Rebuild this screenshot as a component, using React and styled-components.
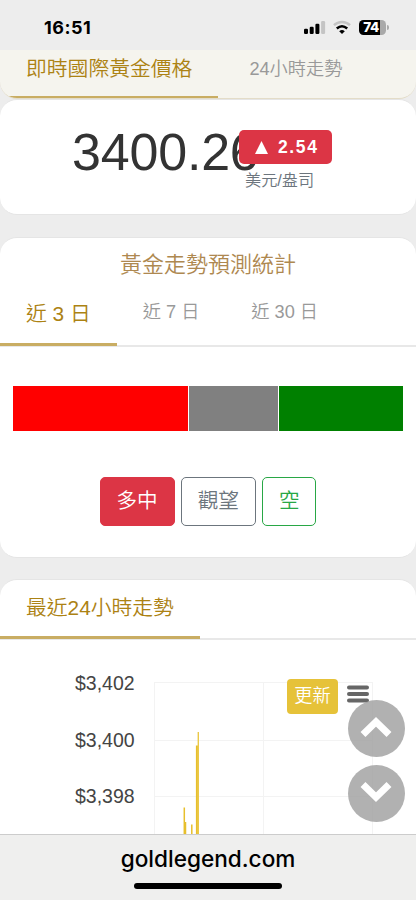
import styled, { createGlobalStyle } from "styled-components";

const GlobalStyle = createGlobalStyle`
    * {
        box-sizing: border-box;
    }

    body {
        margin: 0;
        background: #ededed;
        font-family: 'Liberation Sans', 'Noto Sans CJK TC', sans-serif;
        font-weight: 350;
    }
`;

const forecast = [
    { color: 'red', value: 175.5 },
    { color: 'gray', value: 89 },
    { color: 'green', value: 124 },
];

const prices = ['$3,402', '$3,400', '$3,398'];

function Signal() {
    return (
        <svg width="22" height="14" viewBox="0 0 22 14">
            <rect x="0" y="8.8" width="4" height="5.2" rx="1.2" />
            <rect x="5.7" y="6.7" width="4" height="7.3" rx="1.2" />
            <rect x="11.4" y="3.8" width="4" height="10.2" rx="1.2" />
            <rect x="17.1" y="1" width="4" height="13" rx="1.2" fill="#c4c4c4" />
        </svg>
    )
}

function Wifi() {
    return (
        <svg width="18" height="14" viewBox="0 0 18 14" fill="none" strokeWidth="2.5">
            <path d="M1 5.2 C5.5 .9 12.5 .9 17 5.2" stroke="#c4c4c4" />
            <path d="M3.8 8.5 C7 5.7 11 5.7 14.2 8.5" stroke="#000" />
            <path d="M6.2 11.2 Q9 8.8 11.8 11.2 L9 14 Z" fill="#000" />
        </svg>
    )
}

function Chevron({ down }) {
    return (
        <svg width="32" height="22" viewBox="0 0 32 22" fill="none">
            <path
                d={down ? "M3 3.5 L16 16.2 L29 3.5" : "M3 18.5 L16 5.8 L29 18.5"}
                stroke="#fff"
                strokeWidth="7"
                strokeLinejoin="miter"
            />
        </svg>
    )
}

function PriceChart() {
    return (
        <Plot viewBox="0 0 262 154" width="262" height="154" fill="none">
            <path d="M0 2.5H219M0 60.5H219M0 116.5H219M.5 2V154M109.5 2V154M218.5 2V154" stroke="#f3f3f3" />
            <path d="M30.3 154V127.5M31.5 154V142M37.8 154V144.5" stroke="#e7bf2c" strokeWidth="1.5" />
            <path d="M42.9 154V65.5" stroke="#e7bf2c" strokeWidth="2" />
            <path d="M44.3 154V52" stroke="#ebc947" strokeWidth="1.4" />
        </Plot>
    )
}

export default function App() {
    return (
        <Screen>
            <GlobalStyle />
            <StatusBar>
                <Time>16:51</Time>
                <StatusIcons>
                    <Signal />
                    <Wifi />
                    <Battery>74</Battery>
                </StatusIcons>
            </StatusBar>
            <Content>
                <StickyTabs>
                    <StickyTab $active>即時國際黃金價格</StickyTab>
                    <StickyTab>24小時走勢</StickyTab>
                </StickyTabs>
                <PriceCard>
                    <Price>3400.26</Price>
                    <Change>
                        <Badge>
                            <svg width="13" height="13" viewBox="0 0 13 13" fill="#fff">
                                <path d="M6.5 0L13 13H0Z" />
                            </svg>
                            2.54
                        </Badge>
                        <Unit>美元/盎司</Unit>
                    </Change>
                </PriceCard>
                <ForecastCard>
                    <Title>黃金走勢預測統計</Title>
                    <Tabs>
                        <Tab $active>近 3 日</Tab>
                        <Tab>近 7 日</Tab>
                        <Tab>近 30 日</Tab>
                    </Tabs>
                    <Bar>
                        {forecast.map((item) => <Segment key={item.color} $color={item.color} $value={item.value} />)}
                    </Bar>
                    <Votes>
                        <Vote $color="#dc3545" $filled>多中</Vote>
                        <Vote $color="#6c757d">觀望</Vote>
                        <Vote $color="#28a745">空</Vote>
                    </Votes>
                </ForecastCard>
                <TrendCard>
                    <Tabs $trend>
                        <TrendTab>最近24小時走勢</TrendTab>
                    </Tabs>
                    <ChartArea>
                        <Axis>
                            {prices.map((price) => <AxisLabel key={price}>{price}</AxisLabel>)}
                        </Axis>
                        <PriceChart />
                        <ChartTools>
                            <Refresh>更新</Refresh>
                            <Menu>
                                <svg width="24" height="20" viewBox="0 0 24 20" stroke="#666" strokeWidth="4" strokeLinecap="round">
                                    <path d="M3 3.5H21M3 10H21M3 16.5H21" />
                                </svg>
                            </Menu>
                        </ChartTools>
                    </ChartArea>
                </TrendCard>
            </Content>
            <Scrollers>
                <Round><Chevron /></Round>
                <Round><Chevron down /></Round>
            </Scrollers>
            <AddressBar>
                <Address>goldlegend.com</Address>
                <HomeIndicator />
            </AddressBar>
        </Screen>
    )
}

const Screen = styled.div`
    position: relative;
    display: flex;
    flex-direction: column;
    width: 416px;
    height: 900px;
    overflow: hidden;
    background: #ededed;
`;

const StatusBar = styled.header`
    display: flex;
    flex: none;
    justify-content: space-between;
    height: 50px;
    padding: 17px 29px 0 44px;
`;

const Time = styled.span`
    font-family: 'Inter', sans-serif;
    font-weight: 700;
    font-size: 18px;
    letter-spacing: 0.5px;
    line-height: 21px;
    color: #000000;
`;

const StatusIcons = styled.div`
    display: flex;
    align-items: center;
    gap: 7px;
    height: 20px;
`;

const Battery = styled.span`
    position: relative;
    width: 27px;
    height: 15px;
    margin: 0 1px 0 1px;
    padding-right: 3px;
    border-radius: 4.5px;
    background: linear-gradient(90deg, #000 76%, #a9a9a9 76%);

    font-family: 'Inter', sans-serif;
    font-weight: 800;
    font-size: 13.5px;
    line-height: 15.5px;
    letter-spacing: -0.5px;
    text-align: center;
    color: #fff;

    &::after {
        content: '';
        position: absolute;
        right: -2.5px;
        top: 5px;
        width: 1.5px;
        height: 5px;
        border-radius: 0 2px 2px 0;
        background: #a9a9a9;
    }
`;

const Content = styled.main`
    flex: 1;
    min-height: 0;
    overflow: hidden;
`;

const StickyTabs = styled.nav`
    display: flex;
    height: 49px;
    overflow: hidden;
    background: #f5f4ee;
    border-bottom: 1px solid #e3dcc8;
    border-radius: 0 0 17px 17px;
`;

const StickyTab = styled.span`
    padding: ${props => props.$active ? '4px 26px 0' : '4px 31px 0'};
    height: 48px;
    border-bottom: 2px solid ${props => props.$active ? '#c9ad63' : 'transparent'};

    font-size: ${props => props.$active ? '20.8px' : '18.2px'};
    line-height: 30px;
    white-space: nowrap;
    color: ${props => props.$active ? '#ac8213' : '#999999'};
`;

const Card = styled.section`
    background: #ffffff;
    border: 1px solid #e5e5e5;
    border-width: 1px 0;
    border-radius: 17px;
`;

const PriceCard = styled(Card)`
    display: flex;
    height: 116px;
    padding: 30px 0 0 72px;
`;

const Price = styled.span`
    width: 167px;
    font-size: 52px;
    letter-spacing: -0.2px;
    line-height: 45px;
    color: #333333;
`;

const Change = styled.div`
    position: relative;
    z-index: 1;
`;

const Badge = styled.div`
    display: flex;
    align-items: center;
    gap: 10px;
    width: 93px;
    height: 34px;
    padding-left: 16px;
    background: #dc3545;
    border-radius: 5px;

    font-weight: 700;
    font-size: 17.5px;
    letter-spacing: 1.6px;
    color: #ffffff;
`;

const Unit = styled.div`
    padding: 4px 0 0 6px;
    font-size: 16.2px;
    line-height: 24px;
    color: #6c757d;
`;

const ForecastCard = styled(Card)`
    height: 321px;
    margin-top: 22px;
`;

const Title = styled.h2`
    margin: 0;
    padding-top: 11px;
    font-weight: 350;
    font-size: 22px;
    line-height: 32px;
    text-align: center;
    color: #ae8850;
`;

const Tabs = styled.nav`
    display: flex;
    height: ${props => props.$trend ? '60px' : '66px'};
    border-bottom: 2px solid #e8e8e8;
`;

const Tab = styled.span`
    height: 65px;
    padding: ${props => props.$active ? '18px 26px 0' : '16px 26px 0'};
    border-bottom: 3px solid ${props => props.$active ? '#c9ad63' : 'transparent'};

    font-size: ${props => props.$active ? '20.8px' : '18.2px'};
    line-height: 30px;
    white-space: nowrap;
    color: ${props => props.$active ? '#ac8213' : '#999999'};
`;

const TrendTab = styled(Tab)`
    height: 59px;
    padding: 13px 26px 0;
    border-bottom-color: #c9ad63;
    font-size: 20.8px;
    color: #ac8213;
`;

const Bar = styled.div`
    display: flex;
    gap: 1px;
    height: 45px;
    margin: 39px 13px 0;
`;

const Segment = styled.div`
    flex: ${props => props.$value} 0 0;
    background: ${props => props.$color};
`;

const Votes = styled.div`
    display: flex;
    justify-content: center;
    gap: 6px;
    margin-top: 46px;
`;

const Vote = styled.button`
    height: 49px;
    padding: 0 16px 1px;
    background: ${props => props.$filled ? props.$color : 'transparent'};
    border: 1px solid ${props => props.$color};
    border-radius: 5px;

    font-family: inherit;
    font-weight: 350;
    font-size: 20.6px;
    line-height: 30px;
    color: ${props => props.$filled ? '#ffffff' : props.$color};
`;

const TrendCard = styled(Card)`
    height: 400px;
    margin-top: 21px;
`;

const ChartArea = styled.div`
    position: relative;
    display: flex;
    padding-top: 40px;
`;

const Axis = styled.div`
    display: flex;
    flex-direction: column;
    gap: 32.5px;
    width: 154px;
    margin-top: -9px;
    padding-left: 75px;
`;

const AxisLabel = styled.span`
    font-size: 19.5px;
    line-height: 24px;
    color: #444444;
`;

const Plot = styled.svg`
    display: block;
`;

const ChartTools = styled.div`
    position: absolute;
    top: 39px;
    left: 287px;
    display: flex;
    gap: 7.5px;
`;

const Refresh = styled.button`
    width: 51px;
    height: 35px;
    padding: 0 0 5px;
    background: #e6c239;
    border: 0;
    border-radius: 4px;

    font-family: inherit;
    font-weight: 350;
    font-size: 18.2px;
    color: #ffffff;
`;

const Menu = styled.span`
    padding-top: 5px;
`;

// floating page-up / page-down buttons
const Scrollers = styled.div`
    position: absolute;
    top: 700px;
    right: 11.5px;
    display: flex;
    flex-direction: column;
    gap: 8px;
`;

const Round = styled.span`
    display: flex;
    align-items: center;
    justify-content: center;
    width: 57px;
    height: 57px;
    padding-bottom: 4px;
    border-radius: 50%;
    background: rgba(160, 160, 160, 0.82);
`;

const AddressBar = styled.footer`
    position: relative;
    display: flex;
    flex: none;
    flex-direction: column;
    align-items: center;
    height: 66px;
    padding-top: 9px;
    background: #efefee;
    border-top: 1px solid #cccccc;
`;

const Address = styled.span`
    font-family: 'Inter', sans-serif;
    font-weight: 500;
    font-size: 22.6px;
    line-height: 29px;
    color: #000000;
`;

const HomeIndicator = styled.span`
    width: 148px;
    height: 6px;
    margin-top: 10px;
    border-radius: 3px;
    background: #000000;
`;
